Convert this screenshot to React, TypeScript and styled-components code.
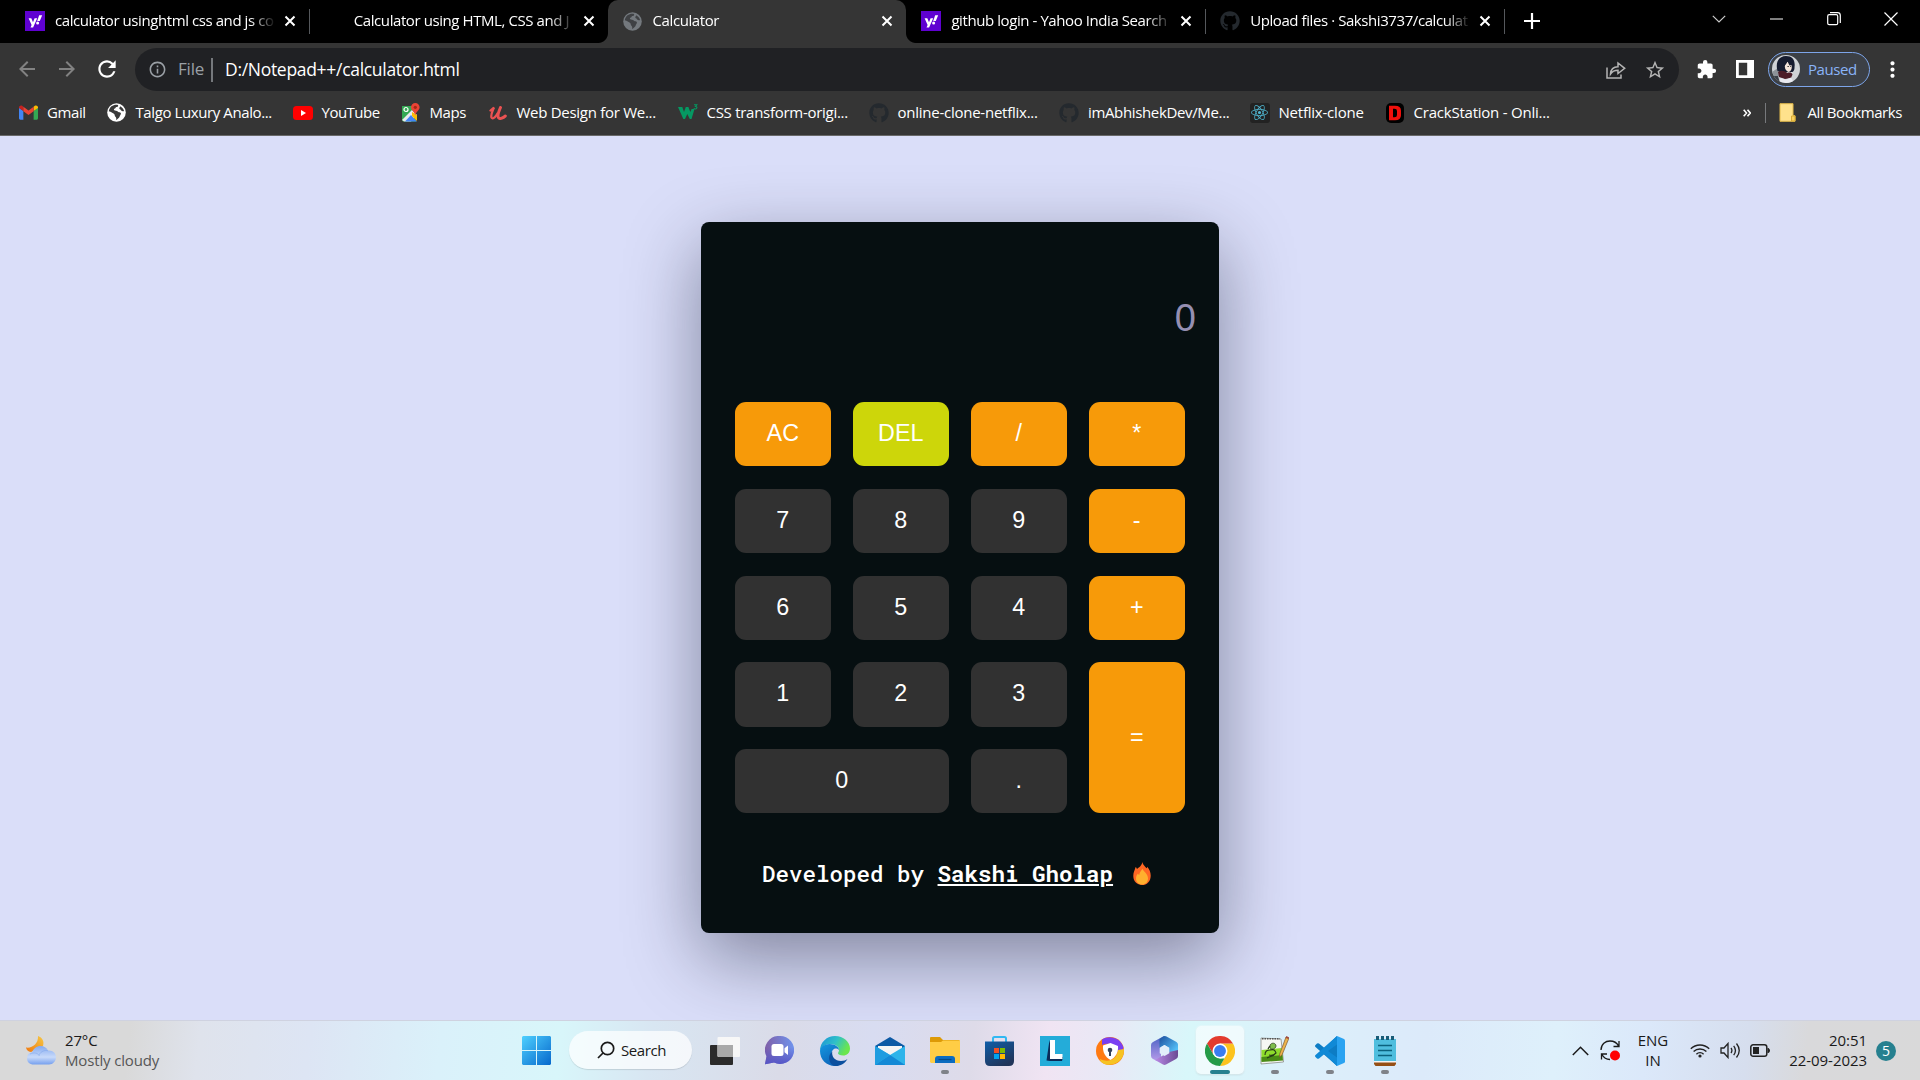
import React from "react";
import styled, { createGlobalStyle, css } from "styled-components";
import {
  MdArrowBack,
  MdArrowForward,
  MdExtension,
  MdInfoOutline,
  MdMoreVert,
  MdPublic,
  MdRefresh,
  MdStarBorder,
} from "react-icons/md";
import { FaGithub } from "react-icons/fa";
import { SiReact } from "react-icons/si";

const ui = `"Segoe UI", "Open Sans", "Noto Sans", sans-serif`;

const GlobalStyle = createGlobalStyle`
  * { box-sizing: border-box; }
  body { margin: 0; overflow: hidden; font-family: ${ui}; }
  svg { display: block; flex: none; }
`;

const Desktop = styled.div`
  width: 1920px;
  height: 1080px;
  display: flex;
  flex-direction: column;
  background: #000;
`;

/* ---------- Tab strip ---------- */

const TabStrip = styled.div`
  height: 43px;
  flex: none;
  display: flex;
  align-items: stretch;
  padding-left: 10px;
  color: #fff;
`;

const TabBox = styled.div<{ $active?: boolean; $separator?: boolean }>`
  position: relative;
  width: 298.8px;
  flex: none;
  display: flex;
  align-items: center;
  padding: 0 10px 1px 15px;
  ${(p) =>
    p.$separator &&
    css`
      &::after {
        content: "";
        position: absolute;
        right: -1px;
        top: 9px;
        width: 1px;
        height: 25px;
        background: #55585c;
      }
    `}
  ${(p) =>
    p.$active &&
    css`
      background: #353535;
      border-radius: 10px 10px 0 0;
      &::before,
      &::after {
        content: "";
        position: absolute;
        bottom: 0;
        width: 10px;
        height: 10px;
      }
      &::before {
        left: -10px;
        background: radial-gradient(circle at 0 0, transparent 9.5px, #353535 10.5px);
      }
      &::after {
        right: -10px;
        background: radial-gradient(circle at 100% 0, transparent 9.5px, #353535 10.5px);
      }
    `}
`;

const Favicon = styled.span`
  width: 20px;
  height: 20px;
  flex: none;
  display: flex;
  align-items: center;
  justify-content: center;
`;

const TabTitle = styled.span`
  width: 221px;
  margin-left: 10px;
  flex: none;
  white-space: nowrap;
  font-size: 15px;
  line-height: 22px;
  padding-bottom: 2px;
  letter-spacing: -0.42px;
  -webkit-mask-image: linear-gradient(90deg, #000 195px, transparent 221px);
  mask-image: linear-gradient(90deg, #000 195px, transparent 221px);
`;

const CloseSlot = styled.span`
  width: 20px;
  margin-left: 5px;
  display: flex;
  justify-content: center;
`;

const NewTab = styled.span`
  width: 24px;
  margin-left: 16px;
  padding-bottom: 1px;
  display: flex;
  align-items: center;
  justify-content: center;
`;

const WindowControls = styled.div`
  margin-left: auto;
  display: flex;
  align-items: center;
  height: 37px;
  > span {
    width: 57.3px;
    display: flex;
    justify-content: center;
  }
`;

/* ---------- Toolbar ---------- */

const Toolbar = styled.div`
  height: 53px;
  flex: none;
  display: flex;
  align-items: center;
  background: #353535;
  color: #fff;
`;

const NavButton = styled.span<{ $dim?: boolean }>`
  width: 40px;
  padding-bottom: 1px;
  display: flex;
  justify-content: center;
  color: ${(p) => (p.$dim ? "#828282" : "#fff")};
`;

const NavGroup = styled.div`
  display: flex;
  align-items: center;
  width: 135px;
  padding-left: 7px;
`;

const Omnibox = styled.div`
  width: 1544px;
  height: 43px;
  display: flex;
  align-items: center;
  border-radius: 22px;
  background: #202124;
  padding: 0 13px 0 13px;
  color: #9aa0a6;
`;

const Scheme = styled.span`
  width: 35px;
  margin-left: 11px;
  font-size: 17px;
  letter-spacing: -0.2px;
  border-right: 2px solid #75787c;
  line-height: 22px;
  padding-bottom: 2px;
`;

const Url = styled.span`
  margin-left: 12px;
  font-size: 17.5px;
  line-height: 22px;
  padding-bottom: 2px;
  letter-spacing: -0.3px;
  color: #fff;
`;

const OmniActions = styled.div`
  margin-left: auto;
  display: flex;
  align-items: center;
  gap: 18px;
  color: #b4b4b4;
`;

const Extensions = styled.div`
  display: flex;
  align-items: center;
  gap: 19px;
  margin-left: 17px;
  padding-bottom: 1px;
`;

const ProfilePill = styled.div`
  width: 102px;
  height: 35px;
  margin: 0 2px 1px 14px;
  display: flex;
  align-items: center;
  gap: 8px;
  padding: 0 0 1px 3px;
  border: 1.6px solid #7da5ea;
  border-radius: 18px;
  background: #3c4046;
  color: #8ab4f8;
  font-size: 15px;
  letter-spacing: -0.45px;
`;

/* ---------- Bookmarks ---------- */

const BookmarkBar = styled.div`
  height: 40px;
  flex: none;
  display: flex;
  align-items: center;
  padding: 0 0 6px 18px;
  background: #353535;
  border-bottom: 1px solid #686868;
  color: #fff;
`;

const Bookmark = styled.span<{ $w: number; $ls: number }>`
  width: ${(p) => p.$w}px;
  flex: none;
  display: flex;
  align-items: center;
  gap: 9px;
  white-space: nowrap;
  font-size: 15px;
  line-height: 20px;
  letter-spacing: ${(p) => p.$ls}px;
`;

const BookmarkTitle = styled.span`
  padding-bottom: 1px;
`;

const BookmarkEnd = styled.div`
  margin-left: auto;
  display: flex;
  align-items: center;
  padding-right: 18px;
`;

const Overflow = styled.span`
  width: 24px;
  display: flex;
  justify-content: center;
`;

const Divider = styled.span`
  width: 1px;
  height: 20px;
  margin: 0 13px 0 6px;
  background: #77797c;
`;

const AllBookmarks = styled.span`
  display: flex;
  align-items: center;
  gap: 12px;
  font-size: 15px;
  line-height: 20px;
  letter-spacing: -0.42px;
`;

/* ---------- Calculator ---------- */

const Page = styled.main`
  height: 884px;
  flex: none;
  padding: 86px 0 0 701px;
  background: #dadef9;
  overflow: hidden;
`;

const Card = styled.section`
  width: 518.3px;
  height: 711px;
  display: flex;
  flex-direction: column;
  padding: 0 34px;
  border-radius: 8px;
  background: #060f11;
  box-shadow: 0 25px 75px rgba(4, 6, 30, 0.42);
`;

const Display = styled.div`
  height: 180px;
  margin-right: -10.5px;
  padding-top: 74px;
  text-align: right;
  font-family: Arial, "Liberation Sans", sans-serif;
  font-size: 38px;
  line-height: 44px;
  color: #958fb2;
`;

const Keys = styled.div`
  display: grid;
  grid-template-columns: repeat(4, 95.6px);
  grid-template-rows: repeat(5, 64.2px);
  column-gap: 22.4px;
  row-gap: 22.6px;
`;

const Key = styled.button<{ $tone: string; $cols?: number; $rows?: number }>`
  grid-column: span ${(p) => p.$cols ?? 1};
  grid-row: span ${(p) => p.$rows ?? 1};
  padding: 0 0 1px;
  border: 0;
  border-radius: 11px;
  background: ${(p) => p.$tone};
  color: #fff;
  font-family: Arial, "Liberation Sans", sans-serif;
  font-size: 23.3px;
`;

const Credit = styled.footer`
  display: flex;
  align-items: center;
  margin-top: 44px;
  padding-left: 27px;
  height: 32px;
  white-space: pre;
  font-family: "Roboto Mono", "DejaVu Sans Mono", monospace;
  font-size: 22.5px;
  font-weight: 500;
  color: #fff;
  a {
    color: inherit;
    font-weight: 700;
    text-decoration: underline;
  }
  svg {
    margin-left: 20px;
  }
`;

/* ---------- Taskbar ---------- */

const TaskbarBox = styled.footer`
  height: 60px;
  flex: none;
  display: flex;
  align-items: center;
  border-top: 1px solid #cfd2e0;
  color: #1a1a1a;
  background: linear-gradient(
    96deg,
    #d9d9d9 0,
    #d9d9d9 130px,
    #dfe3ec 200px,
    #dde5f4 310px,
    #daf1fa 440px,
    #d8f6fa 560px,
    #d8e6f2 650px,
    #dadbe8 780px,
    #d8dcf1 870px,
    #dedbe9 970px,
    #f0e4f3 1045px,
    #e8e9f6 1110px,
    #d8f7fa 1185px,
    #dcf0fa 1290px,
    #dceafa 1420px,
    #def0fb 1550px,
    #dbe8fa 1640px,
    #d6deee 1740px,
    #d9d9db 1800px,
    #d9d9d9 1920px
  );
`;

const Weather = styled.div`
  width: 509px;
  display: flex;
  align-items: center;
  gap: 9px;
  padding-left: 26px;
`;

const WeatherText = styled.div`
  display: flex;
  flex-direction: column;
  font-size: 15px;
  line-height: 20px;
  letter-spacing: -0.15px;
  padding-bottom: 1px;
  small {
    font-size: 15px;
    color: #565656;
  }
`;

const TaskCell = styled.div<{ $state?: "open" | "active" }>`
  position: relative;
  width: 55px;
  height: 59px;
  display: flex;
  align-items: center;
  justify-content: center;
  svg {
    position: relative;
  }
  ${(p) =>
    p.$state === "active" &&
    css`
      &::before {
        content: "";
        position: absolute;
        left: 3.5px;
        top: 5px;
        width: 48px;
        height: 48px;
        border-radius: 5px;
        background: rgba(255, 255, 255, 0.6);
        box-shadow: 0 0 0 1px rgba(255, 255, 255, 0.25), 0 1px 2px rgba(0, 0, 0, 0.12);
      }
    `}
  ${(p) =>
    p.$state &&
    css`
      &::after {
        content: "";
        position: absolute;
        left: 50%;
        top: 49px;
        width: ${p.$state === "active" ? 20 : 8}px;
        height: 4px;
        border-radius: 2px;
        transform: translateX(-50%);
        background: ${p.$state === "active" ? "#26808f" : "#7f8288"};
      }
    `}
`;

const SearchPill = styled.div`
  width: 123px;
  height: 38px;
  margin: 0 5px 1px 5px;
  display: flex;
  align-items: center;
  gap: 6px;
  padding: 0 0 0 28px;
  border-radius: 19px;
  background: rgba(255, 255, 255, 0.72);
  box-shadow: 0 1px 1px rgba(0, 0, 0, 0.12);
  font-size: 15px;
  letter-spacing: -0.4px;
`;

const Tray = styled.div`
  margin-left: auto;
  display: flex;
  align-items: center;
  padding-right: 24px;
`;

const TrayStack = styled.div<{ $w: number; $align: "center" | "right"; $ml: number }>`
  width: ${(p) => p.$w}px;
  margin-left: ${(p) => p.$ml}px;
  text-align: ${(p) => p.$align};
  font-size: 15px;
  line-height: 20px;
  letter-spacing: -0.05px;
  padding-bottom: 2px;
`;

const TrayIcon = styled.span<{ $ml: number }>`
  margin-left: ${(p) => p.$ml}px;
`;

const Badge = styled.span`
  width: 20px;
  height: 20px;
  margin-left: 9px;
  border-radius: 50%;
  background: #26808f;
  color: #fff;
  font-size: 14px;
  line-height: 20px;
  text-align: center;
`;

/* ---------- Drawings ---------- */

const Cross = () => (
  <svg width="12" height="12" viewBox="0 0 12 12" stroke="#fff" strokeWidth="2">
    <path d="M1.5 1.5 10.5 10.5M10.5 1.5 1.5 10.5" />
  </svg>
);

const Yahoo = () => (
  <svg width="20" height="20" viewBox="0 0 20 20">
    <rect width="20" height="20" fill="#5f01d1" />
    <path d="M3.6 7.2h2.7l1.7 4 1.6-4h2.6L8.1 16.4H5.5l1.1-2.5z" fill="#fff" />
    <path d="M14.2 4.3h3l-2.4 5.7h-2.6z" fill="#fff" />
    <circle cx="12.6" cy="11.9" r="1.5" fill="#fff" />
  </svg>
);

const Globe = ({ disc, land }: { disc: string; land: string }) => (
  <svg width="19" height="19" viewBox="0 0 19 19">
    <circle cx="9.5" cy="9.5" r="9.3" fill={disc} />
    <path
      d="M11 1.900c.6 1.200-.4 2-1.600 2.200-.9.200-.7 1.200-1.500 1.500-1 .3-1.300.9-.6 1.700.7.700 2.600.2 3.500 1.300.6.900 1.600.6 2.400.9 1.100.5.8 1.700.2 2.400-.9 1-.6 2.500-2 3.300-.9.600-1.300 1.500-2.200 1.800.1-1.300.2-2.500-.7-3.300-1-.8-.5-2-1.300-2.800C5.900 9.800 4 9 1.800 8.200c.3-2 1.200-3.700 2.700-4.900C6.300 2 8.700 1.300 11 1.900z"
      fill={land}
    />
    <path d="M13.200 3.200c2 1 3.300 2.700 3.900 4.800-1.300.5-2.500.2-3.100-.8-.5-1-2-1-1.700-2.200.2-.7.900-.9.900-1.800z" fill={land} />
  </svg>
);

const Gmail = () => (
  <svg width="19" height="15" viewBox="0 0 24 18">
    <path d="M0 3v13.4c0 .9.7 1.6 1.6 1.6h3.9V7z" fill="#4285f4" />
    <path d="M24 3v13.4c0 .9-.7 1.6-1.6 1.6h-3.9V7z" fill="#34a853" />
    <path d="M18.5 7V1.6L20 .5c1.7-1.2 4 0 4 2V3.300z" fill="#fbbc04" />
    <path d="M0 3.300V2.500C0 .5 2.300-.7 4 .5l1.500 1.100V7z" fill="#c5221f" />
    <path d="M5.500 7.400V1.600L12 6.500l6.500-4.900v5.800L12 12.300z" fill="#ea4335" />
  </svg>
);

const YouTube = () => (
  <svg width="20" height="14" viewBox="0 0 20 14">
    <rect width="20" height="14" rx="3.500" fill="#f00" />
    <path d="M8 4v6l5-3z" fill="#fff" />
  </svg>
);

const Maps = () => (
  <svg width="18" height="19" viewBox="0 0 18 19">
    <path d="M0 3h14v15.500H2A2 2 0 0 1 0 17z" fill="#34a853" />
    <path d="M0 17 10 7l5 5-6 6.500H2z" fill="#e8eaed" />
    <path d="M3 18.500 9 12l6 6.500z" fill="#4285f4" />
    <path d="m10 9 5 3v6l-5-5z" fill="#fbbc04" />
    <circle cx="4" cy="6.500" r="2" fill="none" stroke="#fff" strokeWidth="1.200" />
    <path d="M13.300 0a4.300 4.300 0 0 1 4.300 4.300c0 3-3.300 4-4.300 8-1-4-4.300-5-4.300-8A4.300 4.300 0 0 1 13.300 0z" fill="#ea4335" />
    <circle cx="13.300" cy="4.300" r="1.600" fill="#a52714" />
  </svg>
);

const Udemy = () => (
  <svg width="18" height="14" viewBox="0 0 18 14" fill="none" stroke="#eb5252" strokeLinecap="round">
    <path d="M1.500 4.500 5 1.500C3.500 5 1.500 9 2.500 11.500c1.200 2.500 5-1.500 6-4" strokeWidth="2.300" />
    <path d="M11.500 1.500C9.500 6 8 9.500 9.500 11.700c1.500 2 5-.2 6.800-1.700" strokeWidth="3" />
  </svg>
);

const W3 = () => (
  <svg width="20" height="17" viewBox="0 0 20 17">
    <path d="M0 3h4.300l1.700 5 1.800-5h2.600l1.900 5 1.300-3h2.900L13.500 15h-1.700L9.300 10 7 15H5.300z" fill="#059862" />
    <path d="M16 .8h2.800L17.500 2.500c2 0 1.800 2.500-.1 2.500-.7 0-1.200-.2-1.500-.7" fill="none" stroke="#059862" strokeWidth="1.100" />
  </svg>
);

const ReactLogo = styled.span`
  width: 20px;
  height: 20px;
  display: grid;
  place-items: center;
  border-radius: 3px;
  background: #222;
  color: #4fb6d0;
`;

const DLogo = () => (
  <svg width="18" height="20" viewBox="0 0 18 20">
    <rect width="18" height="20" rx="5" fill="#000" />
    <path d="M3 2.800h6q6 0 6 5v4.400q0 5-6 5H3zM7 5.700v8.600h1.500q2.500 0 2.500-2.300V8q0-2.300-2.500-2.300z" fill="#f0100c" fillRule="evenodd" />
  </svg>
);

const Share = () => (
  <svg width="20" height="18" viewBox="0 0 20 18" fill="none" stroke="currentColor" strokeWidth="1.500">
    <path d="M1 6.500V17h14v-3.500" />
    <path d="M4.500 13c.3-5 3-7.300 7.500-7.300V2l6.700 5.300L12 12.500V9.300c-3.500 0-5.500.7-7.500 3.700z" />
  </svg>
);

const SidePanel = () => (
  <svg width="18" height="18" viewBox="0 0 18 18">
    <path d="M0 0h18v18H0zM2.800 2.800v12.400h8.400V2.800z" fill="#fff" fillRule="evenodd" />
  </svg>
);

const Avatar = () => (
  <svg width="28" height="28" viewBox="0 0 28 28">
    <defs>
      <clipPath id="face">
        <circle cx="14" cy="14" r="14" />
      </clipPath>
    </defs>
    <g clipPath="url(#face)">
      <rect width="28" height="28" fill="#cfd2d6" />
      <path d="M0 17l6-4 1 8-5 3z" fill="#8d9298" />
      <path d="M5.500 16C3 7 7 1 14 1c6.500 0 9.500 4.500 8.500 11 .2 2-.5 4-2 5H8z" fill="#161c30" />
      <path d="M13.500 7c3.500-1 6 1 6.300 4.500.2 2.500-1 5-3.200 5.500-2-.8-3.800-2.500-3.800-5.500z" fill="#f3e3da" />
      <path d="M11.500 12c2-2 3-3.500 4-5.500l2 4 2.500-.5.500-4-5-3-5.500 3z" fill="#161c30" />
      <path d="M6 17c3-2 6-1.500 9.500 1 2.500-1 4-.5 5 1.500l-1.500 3.500-6 1-6-2z" fill="#4c1c28" />
      <path d="m7 28 1.500-5 5.500 1.500 5-2L22 28z" fill="#e8e9ef" />
      <path d="M0 21l6 0 2 7H0z" fill="#3b4048" />
      <path d="M15.500 11.500h1.300M18.300 11.500h.9" stroke="#222" />
    </g>
  </svg>
);

const Folder = () => (
  <svg width="17" height="19" viewBox="0 0 17 19">
    <path d="M1 .7h13v12h2v5.600H1z" fill="#ffe28c" stroke="#e3bb4c" />
    <path d="M12.500 18v-5H16v5z" fill="#fbd15f" stroke="#d9ab35" />
  </svg>
);

const Flame = () => (
  <svg width="18" height="23" viewBox="0 0 18 23">
    <path d="M9.300 0c.5 3.200 3 4.300 4.200 6.200.5-.4.700-1 .7-1.500 2.200 2.300 3.500 5.500 3.500 9C17.700 19.500 13.800 23 9 23S.3 19.500.3 14c0-3.500 1.300-5.500 2.300-9 .8.500 1.100 1.100 1.300 2C5.800 5.500 8.800 4 9.300 0z" fill="#ff6723" />
    <path d="M9.500 6.800c.8 2.500 5.500 5 5.500 9.800 0 3.700-2.500 6-6 6s-6-2.500-6-6c0-2.300 1-4 2-5 .3.900.7 1.200 1.200 1.500C6.500 10 8.500 8.500 9.500 6.800z" fill="#ffb02e" />
  </svg>
);

const WeatherIcon = () => (
  <svg width="30" height="29" viewBox="0 0 30 29">
    <defs>
      <linearGradient id="moon" x1="1" y1="0" x2="0" y2="1">
        <stop offset="0" stopColor="#f6c945" />
        <stop offset="1" stopColor="#f0780f" />
      </linearGradient>
      <linearGradient id="cloud" x1="0" y1="0" x2="0" y2="1">
        <stop offset="0" stopColor="#84aaf0" />
        <stop offset=".6" stopColor="#c8dafa" />
        <stop offset="1" stopColor="#76a0ee" />
      </linearGradient>
    </defs>
    <path d="M12 0c4.500 1.500 6.500 5.500 5 10L5 16C2 15.500.5 14 0 11.500 6 12.500 12.500 8 12 0z" fill="url(#moon)" />
    <path d="M6.300 28.500a6.200 6.200 0 0 1-.3-12.200C7.500 12.500 10.500 10 14.500 10c3.500 0 6 1.500 7.500 4.500 5-.5 8 3 8 6.800 0 4-3 7.200-7 7.200z" fill="url(#cloud)" />
    <path d="M4 18c4-2 8-1 9.500 2M13 19c2-4 6-5 9-4.300" fill="none" stroke="#7ba2ea" strokeWidth=".8" opacity=".6" />
  </svg>
);

const Windows = () => (
  <svg width="29" height="29" viewBox="0 0 29 29">
    <defs>
      <linearGradient id="win" gradientUnits="userSpaceOnUse" x1="0" y1="0" x2="29" y2="29">
        <stop offset="0" stopColor="#4fd0ff" />
        <stop offset="1" stopColor="#0668cc" />
      </linearGradient>
    </defs>
    <path d="M1 0h13v14H0V1zM15 0h13l1 1v13H15zM0 15h14v14H1l-1-1zM15 15h14v13l-1 1H15z" fill="url(#win)" />
  </svg>
);

const Magnifier = () => (
  <svg width="18" height="18" viewBox="0 0 18 18" fill="none" stroke="#1a1a1a" strokeWidth="1.700">
    <circle cx="10.500" cy="7.500" r="6.200" />
    <path d="M6 12 1 17" />
  </svg>
);

const TaskView = () => (
  <svg width="30" height="28" viewBox="0 0 30 28">
    <rect y="8" width="23" height="20" rx="1" fill="#2b2b2b" />
    <rect x="7.500" y="0" width="22.500" height="20" rx="1" fill="#f7f7f7" />
    <path d="M7.500 8H23v12H8.500l-1-1z" fill="#a9a9a9" />
  </svg>
);

const Teams = () => (
  <svg width="29" height="29" viewBox="0 0 29 29">
    <defs>
      <linearGradient id="teams" x1="0" y1=".3" x2="1" y2=".2">
        <stop offset="0" stopColor="#7f5fa8" />
        <stop offset="1" stopColor="#6f94ee" />
      </linearGradient>
      <linearGradient id="teams2" x1="0" y1="0" x2="0" y2="1">
        <stop offset=".4" stopColor="#5558cc" stopOpacity="0" />
        <stop offset="1" stopColor="#5456c8" />
      </linearGradient>
    </defs>
    <path d="M15 0a14 14 0 1 1-6 26.600L0 28.300l1.500-8A14 14 0 0 1 15 0z" fill="url(#teams)" />
    <path d="M15 0a14 14 0 1 1-6 26.600L0 28.300l1.500-8A14 14 0 0 1 15 0z" fill="url(#teams2)" />
    <rect x="6.500" y="8" width="12" height="12" rx="2.500" fill="#fff" />
    <path d="M19.500 12.300 23 9.500v9.500l-3.500-2.800z" fill="#fff" />
  </svg>
);

const Edge = () => (
  <svg width="30" height="30" viewBox="0 0 30 30">
    <defs>
      <linearGradient id="e1" x1="0" y1="0" x2="1" y2=".4">
        <stop offset="0" stopColor="#1b8fd8" />
        <stop offset=".55" stopColor="#2fc0c8" />
        <stop offset="1" stopColor="#6be64e" />
      </linearGradient>
      <linearGradient id="e2" x1="0" y1="0" x2=".6" y2="1">
        <stop offset="0" stopColor="#1598e0" />
        <stop offset="1" stopColor="#0c62b8" />
      </linearGradient>
    </defs>
    <path d="M15 0C23.500 0 30 6 30 12.500c0 4.500-3.200 7-6.800 7-3.400 0-5.200-1-5.200-2.200 0-.9 1-1.500 1-3.300C19 10.500 15 8 10.500 8 5 8 1 11.500 0 15 0 6 7 0 15 0z" fill="url(#e1)" />
    <path d="M0 15c0-4 4.500-7 9.500-7 5.500 0 9.500 3 9.500 6-4-3.500-7.500 0-7.500 4 0 6 5.500 9.500 10.500 9 1 0-3 3-7 3C6.500 30 0 23.500 0 15z" fill="url(#e2)" />
    <path d="M12.300 15.500c-1 5 2.700 9.500 8.700 9.500 3 0 5-1 6.500-2C25 27.500 20.500 30 15.500 30 9.500 29.500 6.500 20 12.300 15.500z" fill="#0b4f9e" />
  </svg>
);

const Mail = () => (
  <svg width="30" height="28" viewBox="0 0 30 28">
    <path d="M0 9 15 0l15 9-2 6H2z" fill="#0c59a4" />
    <path d="M3 9h24v8L15 21 3 17z" fill="#f4f4f4" />
    <path d="M0 9v19h30V9L15 18z" fill="#2eb4ea" />
    <path d="M0 28 15 18l15 10z" fill="#1489d6" />
    <path d="M0 9v19l15-10z" fill="#1e9ce0" />
  </svg>
);

const Explorer = () => (
  <svg width="30" height="27" viewBox="0 0 30 27">
    <path d="M0 1q0-1 1-1h9l3 3h16.500v5H0z" fill="#dd9a06" />
    <path d="M0 5h11l2-1.500h17V26H1l-1-1z" fill="#ffcd45" />
    <path d="M5 26v-4q0-3 3-3h14q3 0 3 3v4z" fill="#0c6cc0" />
    <path d="M8.500 22.500h13" stroke="#074a86" strokeWidth="1.200" />
  </svg>
);

const Store = () => (
  <svg width="29" height="30" viewBox="0 0 29 30">
    <path d="M8 6V2.500Q8 1 9.500 1h10Q21 1 21 2.500V6" fill="none" stroke="#31b8f2" strokeWidth="2" />
    <defs>
      <linearGradient id="store" x1="0" y1="0" x2=".6" y2="1">
        <stop offset="0" stopColor="#0f5ea8" />
        <stop offset="1" stopColor="#21355a" />
      </linearGradient>
    </defs>
    <path d="M0 5.500h29V25q0 5-5 5H5q-5 0-5-5z" fill="url(#store)" />
    <path d="M9 12h5v5H9z" fill="#f25022" />
    <path d="M15 12h5v5h-5z" fill="#7fba00" />
    <path d="M9 18h5v5H9z" fill="#00a4ef" />
    <path d="M15 18h5v5h-5z" fill="#ffb900" />
  </svg>
);

const LApp = () => (
  <svg width="30" height="30" viewBox="0 0 30 30">
    <rect width="30" height="30" fill="#24acd9" />
    <path d="m9.500 4-3 20.500 3.500.5h12l1-4-11-1z" fill="#0b2a58" />
    <path d="M10 4h5v14h7.500v5H10z" fill="#fff" />
  </svg>
);

const SecureBrowser = () => (
  <svg width="28" height="28" viewBox="0 0 28 28">
    <circle cx="14" cy="14" r="14" fill="#ff7a12" />
    <path d="M6 2.500C13-2 25 .5 27.500 11c-2 5-5 4-6 3.500C21 7 12 5 6 8z" fill="#7a3ff2" />
    <path d="M27.800 12C29 22 20 29 11 27.700 6 27 4 24 4 22c8 4 17 1 18-9z" fill="#f6c323" />
    <path d="M7 8.500 14.500 6 22 9c.5 6-2 11-7.500 14C9 20 6.500 15 7 8.500z" fill="#fff" />
    <circle cx="14" cy="13" r="2.300" fill="#33415c" />
    <path d="M13 14h2v5h-2z" fill="#33415c" />
  </svg>
);

const M365 = () => (
  <svg width="27" height="29" viewBox="0 0 27 29">
    <defs>
      <linearGradient id="m1" x1="0" y1="0" x2="0" y2="1">
        <stop offset="0" stopColor="#4a62c4" />
        <stop offset="1" stopColor="#b79bea" />
      </linearGradient>
      <linearGradient id="m2" x1="0" y1="0" x2="1" y2="1">
        <stop offset="0" stopColor="#1c4f9e" />
        <stop offset=".8" stopColor="#54bdf5" />
      </linearGradient>
      <linearGradient id="m3" x1="0" y1="0" x2="1" y2="0">
        <stop offset="0" stopColor="#b98ae6" />
        <stop offset="1" stopColor="#6a4a94" />
      </linearGradient>
    </defs>
    <path d="M13 0 2 6Q0 7 0 9v11q0 2 2 3l4 2 4-3V8z" fill="url(#m1)" />
    <path d="M13 0 8.500 3v9l5-3 4.500 3v7l9-3V8.500q0-1.500-1.500-2.500L15 .3z" fill="url(#m2)" />
    <path d="M4 24 18 16l9-2v6q0 2-2 3l-10 5.500q-1.500.8-3 0z" fill="url(#m3)" />
    <path d="m13.500 9 4.800 2.800v5.400L13.500 20l-4.800-2.800v-5.400z" fill="#e2effa" />
  </svg>
);

const Chrome = () => (
  <svg width="30" height="30" viewBox="0 0 48 48">
    <path d="M24 12h20.800A24 24 0 0 1 24 48l10.400-18z" fill="#fcc31e" />
    <path d="M3.200 12A24 24 0 0 1 44.800 12H24L13.600 30z" fill="#e33b2e" />
    <path d="M3.200 12 13.600 30 24 36h7L24 48A24 24 0 0 1 3.200 12z" fill="#259b48" />
    <circle cx="24" cy="24" r="12" fill="#fff" />
    <circle cx="24" cy="24" r="9.500" fill="#3a7df0" />
  </svg>
);

const NotepadPP = () => (
  <svg width="29" height="29" viewBox="0 0 29 29">
    <path d="m1 2 20 1 2.500 23L1 28z" fill="#f6f7f3" stroke="#8b8d88" strokeWidth=".8" />
    <path d="m1.500 14 20-2 1 10-21 3z" fill="#8fdc2c" />
    <path d="m1.500 21 21-2 .5 5.500-21.500 1.500z" fill="#4b8c16" />
    <path d="M2 2.800h18" stroke="#555" strokeWidth="1.400" strokeDasharray="1.500 1" />
    <path d="M5 19c0-4 2-5 5-5 4-1 5 0 6 3-2 2-4 3-7 2M8 13c1-3 5-5 7-3M7 22c3-2 6-1 8-4" fill="none" stroke="#253a18" strokeWidth="1.100" />
    <path d="M10 9c2-3 6-2 6 1s-5 4-6 2z" fill="#7fbd4a" stroke="#253a18" strokeWidth=".7" />
    <path d="m26 1 3 1-7 17-2.500 2 .2-3z" fill="#edb44b" stroke="#7b5733" strokeWidth=".7" />
    <path d="m25.500 2 3 1 .5-1.600L26.500 0z" fill="#a1483d" />
  </svg>
);

const VSCode = () => (
  <svg width="30" height="30" viewBox="0 0 30 30">
    <path d="M22 0 9.500 12 4 7.600Q3 7 2 7.600L.5 8.900q-1 1 0 2L22 30z" fill="#0d7cc4" />
    <path d="M22 30 9.500 18 4 22.400q-1 .6-2 0L.5 21.100q-1-1 0-2L22 0v8.500L13 15l9 6.500z" fill="#1089d6" />
    <path d="M22 0 29 3q1 .5 1 1.600v20.800q0 1-1 1.600l-7 3z" fill="#2aa3f1" />
  </svg>
);

const Notepad = () => (
  <svg width="22" height="30" viewBox="0 0 22 30">
    <path d="M0 26h22v2l-1.500 2h-19L0 28z" fill="#954f15" />
    <path d="M0 3h22v23H0z" fill="#4fbede" />
    <path d="M0 25h22v1.500H0z" fill="#f3f3f3" />
    <path d="M4 9.500h14M4 14.500h14M4 19.500h14" stroke="#0b627e" strokeWidth="1.700" />
    <path d="M3.500 0v4M8.500 0v4M13.500 0v4M18.500 0v4" stroke="#185c77" strokeWidth="3" />
  </svg>
);

const Update = () => (
  <svg width="21" height="21" viewBox="0 0 21 21" fill="none" stroke="#1a1a1a" strokeWidth="1.300">
    <path d="M1 10C1 4 5.500 1 10 1c4 0 7 2 8.500 5M19 1v5.500h-5.500" />
    <path d="M1.500 19.500V14H7M2 14.500c1.500 3 4 5 8 5" />
    <circle cx="15" cy="15.500" r="5" fill="#f00" stroke="none" />
  </svg>
);

const Wifi = () => (
  <svg width="20" height="15" viewBox="0 0 20 15" fill="none" stroke="#222" strokeWidth="1.400">
    <path d="M.8 5.800a13 13 0 0 1 18.400 0M3.600 8.600a9 9 0 0 1 12.800 0M6.400 11.200a5 5 0 0 1 7.200 0" />
    <circle cx="10" cy="13" r="1.600" fill="#222" stroke="none" />
  </svg>
);

const Volume = () => (
  <svg width="21" height="17" viewBox="0 0 21 17" fill="none" stroke="#222" strokeWidth="1.300">
    <path d="M1 6h3l4-4.500v14L4 11H1z" />
    <path d="M11 6q1.800 2.500 0 5M13.700 3.800q3.500 4.700 0 9.400M16.500 1.500q5.500 7 0 14" />
  </svg>
);

const Battery = () => (
  <svg width="21" height="13" viewBox="0 0 21 13">
    <rect x=".8" y=".8" width="16" height="11.400" rx="2.300" fill="none" stroke="#222" strokeWidth="1.500" />
    <path d="M3 3h6v7H3z" fill="#222" />
    <path d="M17.500 4h1q1.500 1 1.500 2.500T18.500 9h-1z" fill="#222" />
  </svg>
);

/* ---------- Data ---------- */

const tabs = [
  { title: "calculator usinghtml css and js co", icon: <Yahoo />, separator: true },
  { title: "Calculator using HTML, CSS and J", icon: null },
  { title: "Calculator", icon: <Globe disc="#74797e" land="#3f4144" />, active: true },
  { title: "github login - Yahoo India Search", icon: <Yahoo />, separator: true },
  { title: "Upload files · Sakshi3737/calculat", icon: <FaGithub size={20} color="#24292e" />, separator: true },
];

const bookmarks: { title: string; icon: React.ReactNode; w: number; ls: number }[] = [
  { title: "Gmail", icon: <Gmail />, w: 88.5, ls: -0.4 },
  { title: "Talgo Luxury Analo...", icon: <Globe disc="#fff" land="#3a3a3a" />, w: 186, ls: -0.4 },
  { title: "YouTube", icon: <YouTube />, w: 108, ls: -0.5 },
  { title: "Maps", icon: <Maps />, w: 87, ls: -0.4 },
  { title: "Web Design for We...", icon: <Udemy />, w: 190, ls: -0.28 },
  { title: "CSS transform-origi...", icon: <W3 />, w: 191, ls: -0.28 },
  { title: "online-clone-netflix...", icon: <FaGithub size={20} color="#24292e" />, w: 190.5, ls: -0.25 },
  { title: "imAbhishekDev/Me...", icon: <FaGithub size={20} color="#24292e" />, w: 190.5, ls: -0.35 },
  { title: "Netflix-clone", icon: <ReactLogo><SiReact size={17} /></ReactLogo>, w: 135, ls: -0.22 },
  { title: "CrackStation - Onli...", icon: <DLogo />, w: 170, ls: -0.22 },
];

const ORANGE = "#f79a09";
const LIME = "#cdd60a";
const GREY = "#313131";

const keys: { label: string; tone: string; cols?: number; rows?: number }[] = [
  { label: "AC", tone: ORANGE },
  { label: "DEL", tone: LIME },
  { label: "/", tone: ORANGE },
  { label: "*", tone: ORANGE },
  { label: "7", tone: GREY },
  { label: "8", tone: GREY },
  { label: "9", tone: GREY },
  { label: "-", tone: ORANGE },
  { label: "6", tone: GREY },
  { label: "5", tone: GREY },
  { label: "4", tone: GREY },
  { label: "+", tone: ORANGE },
  { label: "1", tone: GREY },
  { label: "2", tone: GREY },
  { label: "3", tone: GREY },
  { label: "=", tone: ORANGE, rows: 2 },
  { label: "0", tone: GREY, cols: 2 },
  { label: ".", tone: GREY },
];

const apps: { icon: React.ReactNode; state?: "open" | "active" }[] = [
  { icon: <TaskView /> },
  { icon: <Teams /> },
  { icon: <Edge /> },
  { icon: <Mail /> },
  { icon: <Explorer />, state: "open" },
  { icon: <Store /> },
  { icon: <LApp /> },
  { icon: <SecureBrowser /> },
  { icon: <M365 /> },
  { icon: <Chrome />, state: "active" },
  { icon: <NotepadPP />, state: "open" },
  { icon: <VSCode />, state: "open" },
  { icon: <Notepad />, state: "open" },
];

export default function App() {
  return (
    <Desktop>
      <GlobalStyle />
      <TabStrip>
        {tabs.map((t) => (
          <TabBox key={t.title} $active={t.active} $separator={t.separator}>
            <Favicon>{t.icon}</Favicon>
            <TabTitle>{t.title}</TabTitle>
            <CloseSlot>
              <Cross />
            </CloseSlot>
          </TabBox>
        ))}
        <NewTab>
          <svg width="16" height="16" stroke="#fff" strokeWidth="2.200">
            <path d="M8 0v16M0 8h16" />
          </svg>
        </NewTab>
        <WindowControls>
          <span>
            <svg width="14" height="8" fill="none" stroke="#ccc" strokeWidth="1.200">
              <path d="m.8 .8 6.200 6.200L13.200.8" />
            </svg>
          </span>
          <span>
            <svg width="13" height="2">
              <path d="M0 1h13" stroke="#fff" />
            </svg>
          </span>
          <span>
            <svg width="14" height="14" fill="none" stroke="#fff" strokeWidth="1.200">
              <rect x=".7" y="2.700" width="10" height="10" rx="1.500" />
              <path d="M3 .7h7.500q2.800 0 2.800 2.800V11" />
            </svg>
          </span>
          <span>
            <svg width="14" height="14" stroke="#fff" strokeWidth="1.200">
              <path d="m.5 .5 13 13M13.500.5l-13 13" />
            </svg>
          </span>
        </WindowControls>
      </TabStrip>

      <Toolbar>
        <NavGroup>
          <NavButton $dim>
            <MdArrowBack size={24} />
          </NavButton>
          <NavButton $dim>
            <MdArrowForward size={24} />
          </NavButton>
          <NavButton>
            <MdRefresh size={26} />
          </NavButton>
        </NavGroup>
        <Omnibox>
          <MdInfoOutline size={19} />
          <Scheme>File</Scheme>
          <Url>D:/Notepad++/calculator.html</Url>
          <OmniActions>
            <Share />
            <MdStarBorder size={22} />
          </OmniActions>
        </Omnibox>
        <Extensions>
          <MdExtension size={21} />
          <SidePanel />
        </Extensions>
        <ProfilePill>
          <Avatar />
          Paused
        </ProfilePill>
        <NavButton>
          <MdMoreVert size={25} />
        </NavButton>
      </Toolbar>

      <BookmarkBar>
        {bookmarks.map((b) => (
          <Bookmark key={b.title} $w={b.w} $ls={b.ls}>
            <Favicon>{b.icon}</Favicon>
            <BookmarkTitle>{b.title}</BookmarkTitle>
          </Bookmark>
        ))}
        <BookmarkEnd>
          <Overflow>
            <svg width="8" height="8" fill="none" stroke="#fff" strokeWidth="1.600">
              <path d="M.7.7 3.500 4 .7 7.300M4.500.7 7.300 4 4.500 7.300" />
            </svg>
          </Overflow>
          <Divider />
          <AllBookmarks>
            <Folder />
            <BookmarkTitle>All Bookmarks</BookmarkTitle>
          </AllBookmarks>
        </BookmarkEnd>
      </BookmarkBar>

      <Page>
        <Card>
          <Display>0</Display>
          <Keys>
            {keys.map((k) => (
              <Key key={k.label} $tone={k.tone} $cols={k.cols} $rows={k.rows}>
                {k.label}
              </Key>
            ))}
          </Keys>
          <Credit>
            Developed by <a>Sakshi Gholap</a>
            <Flame />
          </Credit>
        </Card>
      </Page>

      <TaskbarBox>
        <Weather>
          <WeatherIcon />
          <WeatherText>
            27°C
            <small>Mostly cloudy</small>
          </WeatherText>
        </Weather>
        <TaskCell>
          <Windows />
        </TaskCell>
        <SearchPill>
          <Magnifier />
          Search
        </SearchPill>
        {apps.map((a, i) => (
          <TaskCell key={i} $state={a.state}>
            {a.icon}
          </TaskCell>
        ))}
        <Tray>
          <svg width="17" height="10" fill="none" stroke="#1a1a1a" strokeWidth="1.500">
            <path d="m.8 9 7.700-7.700L16.200 9" />
          </svg>
          <TrayIcon $ml={11}>
            <Update />
          </TrayIcon>
          <TrayStack $w={40} $align="center" $ml={12}>
            ENG
            <br />
            IN
          </TrayStack>
          <TrayIcon $ml={17}>
            <Wifi />
          </TrayIcon>
          <TrayIcon $ml={10}>
            <Volume />
          </TrayIcon>
          <TrayIcon $ml={9}>
            <Battery />
          </TrayIcon>
          <TrayStack $w={86} $align="right" $ml={10}>
            20:51
            <br />
            22-09-2023
          </TrayStack>
          <Badge>5</Badge>
        </Tray>
      </TaskbarBox>
    </Desktop>
  );
}
